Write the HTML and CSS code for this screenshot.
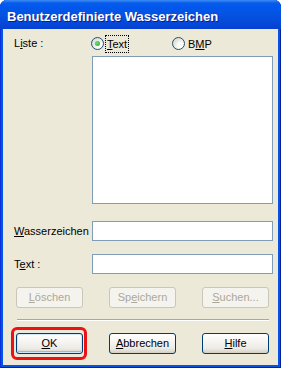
FILE: index.html
```html
<!DOCTYPE html>
<html>
<head>
<meta charset="utf-8">
<link rel="stylesheet" href="styles.css">
</head>
<body>
<div class="window">
  <div class="titlebar"><span class="title">Benutzerdefinierte Wasserzeichen</span></div>
  <div class="content">
    <div class="row-top">
      <span class="label">L<u>i</u>ste :</span>
      <label class="radio r-text"><span class="circle checked"></span><span class="focus"><u>T</u>ext</span></label>
      <label class="radio r-bmp"><span class="circle"></span><span>B<u>M</u>P</span></label>
    </div>
    <div class="listbox"></div>
    <div class="field f1"><span class="label"><u>W</u>asserzeichen</span><span class="input"></span></div>
    <div class="field f2"><span class="label">T<u>e</u>xt :</span><span class="input"></span></div>
    <div class="buttons b1">
      <span class="btn disabled"><u>L</u>öschen</span>
      <span class="btn disabled">Sp<u>e</u>ichern</span>
      <span class="btn disabled"><u>S</u>uchen...</span>
    </div>
    <div class="sep"></div>
    <div class="buttons b2">
      <span class="btn default mark"><u>O</u>K</span>
      <span class="btn"><u>A</u>bbrechen</span>
      <span class="btn"><u>H</u>ilfe</span>
    </div>
  </div>
</div>
</body>
</html>
```

FILE: styles.css
```css
html, body {
  margin: 0;
  padding: 0;
  background: #ffffff;
}
.window {
  width: 281px;
  height: 368px;
  box-sizing: border-box;
  background: #0553e2;
  border-radius: 7px 7px 0 0;
  padding: 0 3px 3px 3px;
  display: flex;
  flex-direction: column;
  font-family: "Liberation Sans", Arial, sans-serif;
  font-size: 11px;
  color: #000;
  box-shadow: inset 1px 0 0 #0831d9, inset -1px 0 0 #001ea0, inset 0 -1px 0 #001ea0;
}
.titlebar {
  height: 29px;
  margin: 0 -3px;
  border-radius: 7px 7px 0 0;
  background: linear-gradient(to bottom, #3c8cf8 0px, #0a5ce9 3px, #0058ee 6px, #0553e2 14px, #0547d8 24px, #0640d0 29px);
  display: flex;
  align-items: flex-start;
  box-sizing: border-box;
  padding: 9px 0 0 7px;
}
.title {
  font-weight: bold;
  font-size: 13px;
  line-height: 15px;
  color: #fff;
  text-shadow: 1px 1px 0 #0a1e8a;
}
.content {
  flex: 1;
  background: #ece9d8;
  padding: 6px 0 0 11px;
  display: flex;
  flex-direction: column;
  position: relative;
}
.label {
  line-height: 13px;
}
u {
  text-decoration: underline;
  text-underline-offset: 1px;
}
.row-top {
  display: flex;
  align-items: center;
  height: 17px;
}
.row-top .label {
  width: 77px;
}
.radio {
  display: flex;
  align-items: center;
}
.r-text {
  width: 81px;
}
.circle {
  width: 11px;
  height: 11px;
  border-radius: 50%;
  border: 1px solid #1c5180;
  background: radial-gradient(circle at 70% 70%, #ffffff 20%, #e6e6dd 60%, #d4d0c0 100%);
  margin-right: 3px;
  position: relative;
}
.circle.checked::after {
  content: "";
  position: absolute;
  left: 3px;
  top: 3px;
  width: 5px;
  height: 5px;
  border-radius: 50%;
  background: radial-gradient(circle at 40% 40%, #72e16a, #21a121);
}
.focus {
  outline: 1px dotted #000;
  outline-offset: 0;
  padding: 2px 1px 1px 1px;
  line-height: 13px;
  margin-left: -1px;
}
.listbox {
  margin: 4px 0 0 78px;
  width: 179px;
  height: 146px;
  border: 1px solid #7f9db9;
  background: #fff;
}
.field {
  display: flex;
  align-items: center;
}
.field .label {
  width: 78px;
}
.f1 { margin-top: 17px; }
.f2 { margin-top: 13px; }
.input {
  width: 179px;
  height: 18px;
  border: 1px solid #7f9db9;
  background: #fff;
}
.buttons {
  display: flex;
  gap: 26px;
  padding-left: 2px;
}
.b1 { margin-top: 13px; }
.b2 { margin-top: 13px; }
.btn {
  width: 67px;
  height: 21px;
  box-sizing: border-box;
  border: 1px solid #003c74;
  border-radius: 3px;
  background: linear-gradient(to bottom, #ffffff 0%, #f6f5f2 40%, #ecebe6 75%, #d6d0c5 100%);
  display: flex;
  align-items: center;
  justify-content: center;
  line-height: 13px;
  position: relative;
  box-shadow: inset 0 -1px 0 #d6d0c5;
}
.btn.disabled {
  border-color: #c9c7ba;
  background: #f4f3ee;
  color: #aca899;
  box-shadow: none;
}
.btn.default {
  box-shadow: inset 0 0 0 1px #cee7ff, inset 0 -1px 0 1px #98b8ea;
}
.mark::after {
  content: "";
  position: absolute;
  left: -6px;
  top: -7px;
  right: -5px;
  bottom: -7px;
  border: 3px solid #ee1111;
  border-radius: 6px;
}
.sep {
  margin: 11px 0 0 3px;
  width: 252px;
  height: 1px;
  background: #aca899;
  box-shadow: 0 1px 0 #ffffff;
}
```
